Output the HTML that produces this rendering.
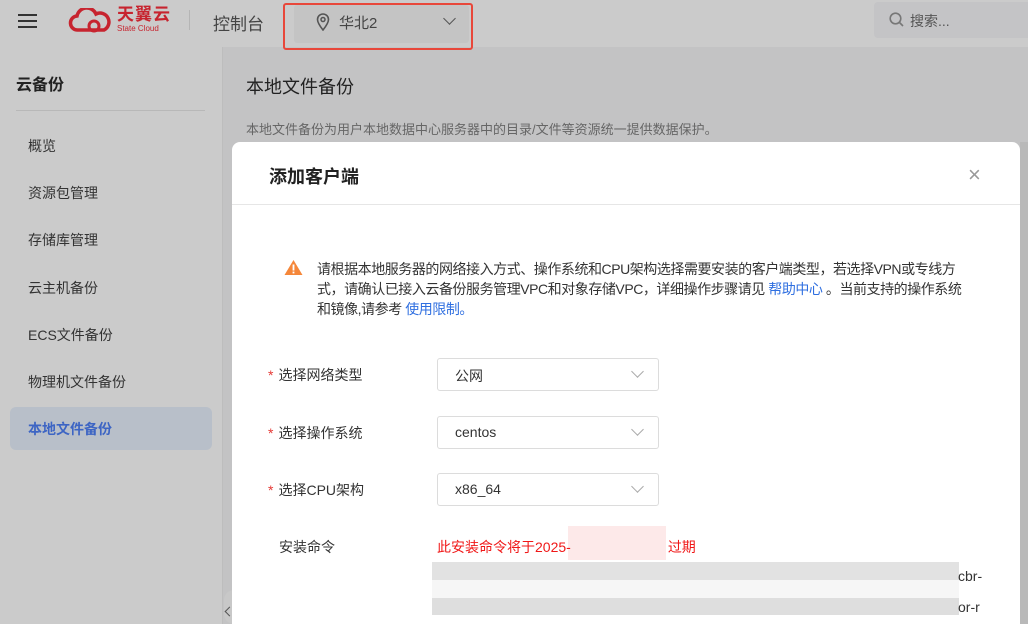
<!DOCTYPE html>
<html style="overflow:hidden"><head><meta charset="utf-8"><style>
*{margin:0;padding:0;box-sizing:border-box}
html,body{width:1028px;height:624px;overflow:hidden}
body{position:relative;font-family:"Liberation Sans","Noto Sans CJK SC",sans-serif;background:#c3c3c4;color:#333}
.hdr{position:absolute;left:0;top:0;width:1028px;height:47px;background:#cbcbcb}
.side{position:absolute;left:0;top:47px;width:223px;height:577px;background:#cbcbcb;border-right:1px solid #bdbdbd}
.side .t{position:absolute;left:16px;top:24px;font-size:16px;font-weight:bold;color:#222}
.side .ln{position:absolute;left:16px;top:63px;width:189px;height:1px;background:#b8b8b8}
.side .it{position:absolute;left:28px;font-size:14px;color:#333}
.sel{position:absolute;left:10px;top:360px;width:202px;height:43px;background:#b8bfc9;border-radius:6px}
.modal{position:absolute;left:232px;top:142px;width:788px;height:482px;background:#fff;border-radius:8px 8px 0 0}
.s{position:absolute;left:437px;width:222px;height:33px;border:1px solid #dcdcdc;border-radius:3px;font-size:14px;padding:7px 0 0 17px;color:#333}
.s:after{content:"";position:absolute;right:16px;top:8px;width:8px;height:8px;border-right:1px solid #aaa;border-bottom:1px solid #aaa;transform:rotate(45deg)}
.lb{position:absolute;left:268px;font-size:14px;color:#333}
.lb b{color:#e53935;font-weight:normal;margin-right:5px}
</style></head><body>
<div class="hdr">
 <div style="position:absolute;left:18px;top:14px;width:19px;height:2px;background:#333;box-shadow:0 6px 0 #333,0 12px 0 #333"></div>
 <svg style="position:absolute;left:68px;top:8px" width="44" height="26" viewBox="0 0 44 26"><path d="M10 22 A7 7 0 0 1 9 8 A10 10 0 0 1 28 6 A8 8 0 0 1 36 22 Z" fill="none" stroke="#c7242f" stroke-width="3.5"/><circle cx="26" cy="18" r="5" fill="none" stroke="#c7242f" stroke-width="3"/></svg>
 <div style="position:absolute;left:117px;top:6px;font-size:17px;line-height:17px;font-weight:bold;color:#c7242f;letter-spacing:1px">天翼云</div>
 <div style="position:absolute;left:117px;top:25px;font-size:8px;line-height:8px;color:#c7242f">State Cloud</div>
 <div style="position:absolute;left:189px;top:10px;width:1px;height:20px;background:#b5b5b5"></div>
 <div style="position:absolute;left:213px;top:10px;font-size:17px;color:#444">控制台</div>
 <div style="position:absolute;left:283px;top:3px;width:190px;height:47px;border:2px solid #e8473a;border-radius:3px"></div>
 <div style="position:absolute;left:294px;top:5px;width:175px;height:38px;background:#c4c4c4;border-radius:3px"></div>
 <svg style="position:absolute;left:316px;top:13px" width="14" height="18" viewBox="0 0 14 18"><path d="M7 17 C3 12 1.5 9 1.5 6.5 A5.5 5.5 0 0 1 12.5 6.5 C12.5 9 11 12 7 17Z" fill="none" stroke="#555" stroke-width="1.6"/><circle cx="7" cy="6.5" r="2" fill="none" stroke="#555" stroke-width="1.5"/></svg>
 <div style="position:absolute;left:339px;top:12px;font-size:15px;color:#444">华北2</div>
 <div style="position:absolute;left:445px;top:14px;width:9px;height:9px;border-right:1.6px solid #555;border-bottom:1.6px solid #555;transform:rotate(45deg)"></div>
 <div style="position:absolute;left:874px;top:2px;width:160px;height:36px;background:#c4c4c6;border-radius:4px"></div>
 <svg style="position:absolute;left:889px;top:12px" width="15" height="15"><circle cx="6.5" cy="6.5" r="5.3" fill="none" stroke="#777" stroke-width="1.6"/><path d="M10.5 10.5 L14 14" stroke="#777" stroke-width="1.6"/></svg>
 <div style="position:absolute;left:910px;top:11px;font-size:14px;color:#555">搜索...</div>
</div>
<div class="side">
 <div class="t">云备份</div><div class="ln"></div>
 <div class="it" style="top:89px">概览</div>
 <div class="it" style="top:136px">资源包管理</div>
 <div class="it" style="top:183px">存储库管理</div>
 <div class="it" style="top:231px">云主机备份</div>
 <div class="it" style="top:278px">ECS文件备份</div>
 <div class="it" style="top:325px">物理机文件备份</div>
 <div class="sel"></div>
 <div class="it" style="top:372px;font-weight:bold;color:#3d65c4">本地文件备份</div>
</div>
<div style="position:absolute;left:224px;top:590px;width:10px;height:34px;background:#c8c8c8;border-radius:10px 0 0 10px"></div>
<div style="position:absolute;left:226px;top:608px;width:7px;height:7px;border-left:1px solid #555;border-bottom:1px solid #555;transform:rotate(45deg)"></div>
<div style="position:absolute;left:246px;top:73px;font-size:18px;color:#222">本地文件备份</div>
<div style="position:absolute;left:246px;top:119px;font-size:13px;color:#666">本地文件备份为用户本地数据中心服务器中的目录/文件等资源统一提供数据保护。</div>
<div class="modal">
 <div style="position:absolute;left:37px;top:21px;font-size:18px;font-weight:bold;color:#222">添加客户端</div>
 <div style="position:absolute;left:736px;top:20px;font-size:22px;color:#999;font-weight:300">×</div>
 <div style="position:absolute;left:0;top:62px;width:788px;height:1px;background:#e6e6e6"></div>
</div>
<svg style="position:absolute;left:284px;top:259px" width="19" height="17"><path d="M9.5 1 L18.5 16 L0.5 16Z" fill="#f5873a"/><rect x="8.6" y="5.5" width="1.8" height="6" fill="#fff"/><rect x="8.6" y="12.6" width="1.8" height="1.8" fill="#fff"/></svg>
<div style="position:absolute;left:317px;top:259px;white-space:nowrap;font-size:14px;line-height:20px;color:#333;letter-spacing:-0.45px">请根据本地服务器的网络接入方式、操作系统和CPU架构选择需要安装的客户端类型，若选择VPN或专线方<br>式，请确认已接入云备份服务管理VPC和对象存储VPC，详细操作步骤请见 <span style="color:#2f6fe0">帮助中心</span> 。当前支持的操作系统<br>和镜像,请参考 <span style="color:#2f6fe0">使用限制。</span></div>
<div class="lb" style="top:365px"><b>*</b>选择网络类型</div>
<div class="lb" style="top:423px"><b>*</b>选择操作系统</div>
<div class="lb" style="top:480px"><b>*</b>选择CPU架构</div>
<div class="s" style="top:358px">公网</div>
<div class="s" style="top:416px">centos</div>
<div class="s" style="top:473px">x86_64</div>
<div class="lb" style="top:537px;left:279px">安装命令</div>
<div style="position:absolute;left:568px;top:526px;width:98px;height:34px;background:#fde9e9"></div>
<div style="position:absolute;left:437px;top:537px;font-size:14px;color:#f01818;white-space:nowrap">此安装命令将于2025-<span style="display:inline-block;width:97px"></span>过期</div>
<div style="position:absolute;left:432px;top:562px;width:527px;height:18px;background:#e2e2e2"></div>
<div style="position:absolute;left:432px;top:580px;width:527px;height:18px;background:#f6f6f6"></div>
<div style="position:absolute;left:432px;top:598px;width:527px;height:17px;background:#dedede"></div>
<div style="position:absolute;left:958px;top:568px;font-size:14px;color:#333">cbr-</div>
<div style="position:absolute;left:958px;top:599px;font-size:14px;color:#333">or-r</div>
<div style="position:absolute;left:1020px;top:142px;width:8px;height:482px;background:#b9b9b9"></div>
</body></html>
